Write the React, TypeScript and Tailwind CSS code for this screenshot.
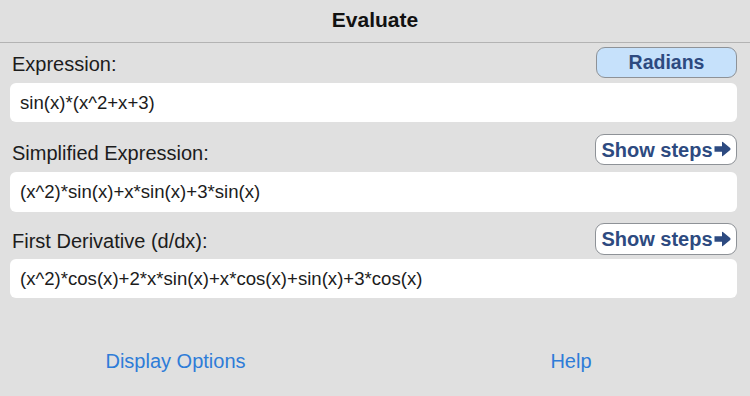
const FONT = { fontFamily: '"Liberation Sans", Arial, sans-serif' }

function Arrow() {
  return (
    <svg width="17" height="16" viewBox="0 0 17 16" className="ml-[1px] -mt-[1px]">
      <path
        d="M0.5 5.2 H8 V1.3 Q8 0.2 8.9 0.9 L16.2 7.1 Q16.9 8 16.2 8.9 L8.9 15.1 Q8 15.8 8 14.7 V10.8 H0.5 Z"
        fill="#2d4a80"
      />
    </svg>
  )
}

function StepsButton() {
  return (
    <button className="h-full w-[142px] flex items-center justify-center rounded-[9px] border border-[#8e9297] bg-white text-[20px] font-bold text-[#2d4a80]">
      Show steps
      <Arrow />
    </button>
  )
}

function Field({ value, h }: { value: string; h: string }) {
  return (
    <div className={`${h} flex items-center rounded-[6px] bg-white px-[10px] text-[18.6px] text-[#1c1c1c]`}>
      {value}
    </div>
  )
}

export default function App() {
  return (
    <div className="w-[750px] h-[396px] bg-[#e0e0e0] overflow-hidden" style={FONT}>
      <div className="h-[43px] border-b border-[#b3b3b3] flex items-center justify-center">
        <span className="text-[21px] font-semibold text-[#111] -mt-[3px]">Evaluate</span>
      </div>

      <div className="pl-[10px] pr-[13px]">
        <div className="mt-[4px] h-[31px] flex items-center justify-between">
          <span className="pl-[2px] text-[20px] text-[#1c1c1c] mt-[2px]">Expression:</span>
          <button className="h-full w-[141px] rounded-[9px] border border-[#8e9297] bg-[#c6e1fb] text-[19.5px] font-bold text-[#2d4a80]">
            Radians
          </button>
        </div>
        <div className="mt-[5px]">
          <Field value="sin(x)*(x^2+x+3)" h="h-[39px]" />
        </div>

        <div className="mt-[12px] h-[31px] flex items-center justify-between">
          <span className="pl-[2px] text-[20px] text-[#1c1c1c] mt-[6px]">Simplified Expression:</span>
          <StepsButton />
        </div>
        <div className="mt-[7px]">
          <Field value="(x^2)*sin(x)+x*sin(x)+3*sin(x)" h="h-[40px]" />
        </div>

        <div className="mt-[11px] h-[32px] flex items-center justify-between">
          <span className="pl-[2px] text-[20px] text-[#1c1c1c] mt-[3px]">First Derivative (d/dx):</span>
          <StepsButton />
        </div>
        <div className="mt-[4px]">
          <Field value="(x^2)*cos(x)+2*x*sin(x)+x*cos(x)+sin(x)+3*cos(x)" h="h-[39px]" />
        </div>
      </div>

      <div className="mt-[48px] grid grid-cols-[351px_358px] gap-x-[41px] h-[24px] items-center text-[20px] text-[#2e7cd8]">
        <span className="text-center">Display Options</span>
        <span className="text-center">Help</span>
      </div>
    </div>
  )
}
